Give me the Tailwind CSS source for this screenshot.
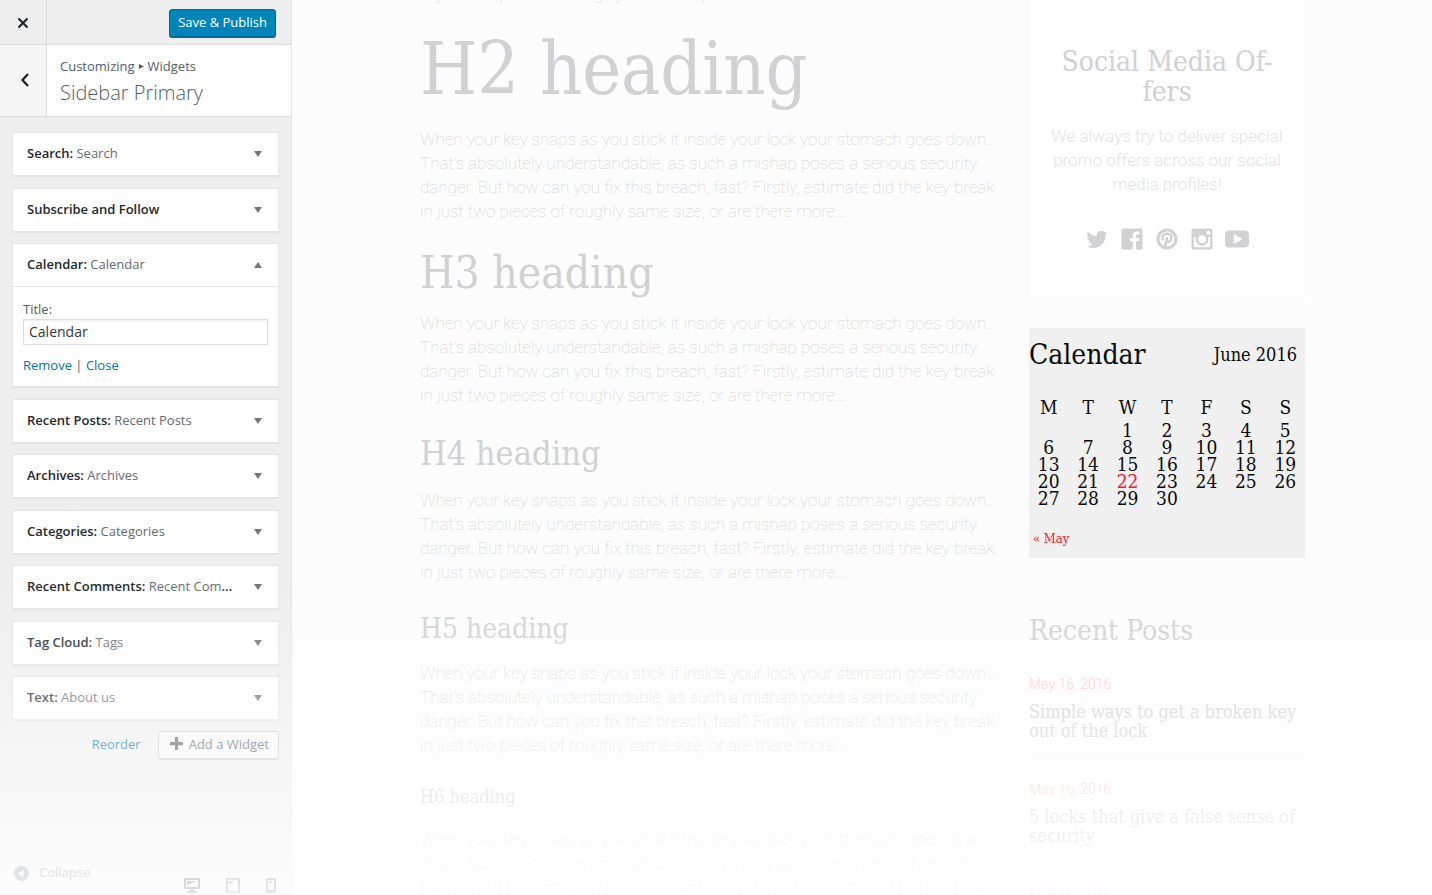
<!DOCTYPE html>
<html lang="en">
<head>
<meta charset="utf-8">
<title>Customizing: Sidebar Primary</title>
<script src="https://cdn.jsdelivr.net/npm/@tailwindcss/browser@4"></script>
</head>
<body class="relative flex h-screen overflow-hidden bg-[#fcfcfc] font-['Open_Sans','Noto_Sans',sans-serif] text-[13px] text-[#555d66]">

<aside class="flex w-[292px] shrink-0 flex-col border-r border-[#e5e5e5] bg-[#eee]">
  <header class="flex h-[45px] shrink-0 border-b border-[#ddd]">
    <button aria-label="Close" class="flex w-[47px] items-center justify-center border-r border-[#ddd] pt-[2px] text-[#191e23]">
      <svg class="size-3" viewBox="0 0 12 12" fill="none" stroke="currentColor" stroke-width="2"><path d="M1.5 1.5l9 9M10.5 1.5l-9 9"/></svg>
    </button>
    <div class="flex flex-1 items-center justify-end pt-px pr-[15px]">
      <button class="h-7 rounded-[3px] border border-[#006799] bg-[#0085ba] px-2 text-white shadow-[0_1px_0_#006799]">Save &amp; Publish</button>
    </div>
  </header>

  <div class="flex h-[72px] shrink-0 border-b border-[#ddd] bg-white">
    <button aria-label="Back" class="flex w-[47px] items-center justify-center border-r border-[#ddd] bg-[#f5f5f5] pb-[2px] pl-[4px] text-[#191e23]">
      <svg class="h-[14px] w-[10px]" viewBox="0 0 10 14" fill="none" stroke="currentColor" stroke-width="2.2"><path d="M8 1L2.500 7 8 13"/></svg>
    </button>
    <div class="px-[13px] pt-[11px]">
      <p class="flex items-center leading-5">Customizing
        <svg class="mx-1 size-[5px]" viewBox="0 0 5 5" fill="currentColor"><path d="M0 0l5 2.500L0 5z"/></svg>
        Widgets</p>
      <h1 class="text-xl font-light leading-[34px]">Sidebar Primary</h1>
    </div>
  </div>

  <main class="flex flex-1 flex-col pt-[15px] pr-3 pl-3">
    <ul class="flex min-h-[588px] flex-col justify-between text-[#72777c]">
      <li class="border border-[#e5e5e5] bg-white shadow-[0_1px_1px_rgba(0,0,0,0.04)]">
        <button class="flex h-[42px] w-full items-center justify-between pr-4 pl-[14px] text-left"><span class="w-[215px] truncate font-semibold text-[#23282d]">Search: <span class="font-normal text-[#646970]">Search</span></span><svg class="h-[6px] w-2" viewBox="0 0 8 6" fill="currentColor"><path d="M0 0h8L4 6z"/></svg></button>
      </li>
      <li class="border border-[#e5e5e5] bg-white shadow-[0_1px_1px_rgba(0,0,0,0.04)]">
        <button class="flex h-[42px] w-full items-center justify-between pr-4 pl-[14px] text-left"><span class="w-[215px] truncate font-semibold text-[#23282d]">Subscribe and Follow</span><svg class="h-[6px] w-2" viewBox="0 0 8 6" fill="currentColor"><path d="M0 0h8L4 6z"/></svg></button>
      </li>
      <li class="border border-[#e5e5e5] bg-white shadow-[0_1px_1px_rgba(0,0,0,0.04)]">
        <button class="flex h-[43px] w-full items-center justify-between border-b border-[#e5e5e5] pr-4 pl-[14px] text-left"><span class="w-[215px] truncate font-semibold text-[#23282d]">Calendar: <span class="font-normal text-[#646970]">Calendar</span></span><svg class="h-[6px] w-2" viewBox="0 0 8 6" fill="currentColor"><path d="M0 6h8L4 0z"/></svg></button>
        <div class="px-[10px] pt-3 pb-[11px] text-[#555d66]">
          <label for="cal-title" class="block leading-5">Title:</label>
          <input id="cal-title" type="text" value="Calendar" class="block h-[26px] w-full border border-[#ddd] bg-white px-[5px] pb-[2px] text-sm text-[#32373c] shadow-[inset_0_1px_2px_rgba(0,0,0,0.07)]">
          <p class="pt-[10px] leading-5"><a href="#" class="text-[#0073aa]">Remove</a> | <a href="#" class="text-[#0073aa]">Close</a></p>
        </div>
      </li>
      <li class="border border-[#e5e5e5] bg-white shadow-[0_1px_1px_rgba(0,0,0,0.04)]">
        <button class="flex h-[42px] w-full items-center justify-between pr-4 pl-[14px] text-left"><span class="w-[215px] truncate font-semibold text-[#23282d]">Recent Posts: <span class="font-normal text-[#646970]">Recent Posts</span></span><svg class="h-[6px] w-2" viewBox="0 0 8 6" fill="currentColor"><path d="M0 0h8L4 6z"/></svg></button>
      </li>
      <li class="border border-[#e5e5e5] bg-white shadow-[0_1px_1px_rgba(0,0,0,0.04)]">
        <button class="flex h-[42px] w-full items-center justify-between pr-4 pl-[14px] text-left"><span class="w-[215px] truncate font-semibold text-[#23282d]">Archives: <span class="font-normal text-[#646970]">Archives</span></span><svg class="h-[6px] w-2" viewBox="0 0 8 6" fill="currentColor"><path d="M0 0h8L4 6z"/></svg></button>
      </li>
      <li class="border border-[#e5e5e5] bg-white shadow-[0_1px_1px_rgba(0,0,0,0.04)]">
        <button class="flex h-[42px] w-full items-center justify-between pr-4 pl-[14px] text-left"><span class="w-[215px] truncate font-semibold text-[#23282d]">Categories: <span class="font-normal text-[#646970]">Categories</span></span><svg class="h-[6px] w-2" viewBox="0 0 8 6" fill="currentColor"><path d="M0 0h8L4 6z"/></svg></button>
      </li>
      <li class="border border-[#e5e5e5] bg-white shadow-[0_1px_1px_rgba(0,0,0,0.04)]">
        <button class="flex h-[42px] w-full items-center justify-between pr-4 pl-[14px] text-left"><span class="w-[215px] truncate font-semibold text-[#23282d]">Recent Comments: <span class="font-normal text-[#646970]">Recent Com</span>...</span><svg class="h-[6px] w-2" viewBox="0 0 8 6" fill="currentColor"><path d="M0 0h8L4 6z"/></svg></button>
      </li>
      <li class="border border-[#e5e5e5] bg-white shadow-[0_1px_1px_rgba(0,0,0,0.04)]">
        <button class="flex h-[42px] w-full items-center justify-between pr-4 pl-[14px] text-left"><span class="w-[215px] truncate font-semibold text-[#23282d]">Tag Cloud: <span class="font-normal text-[#646970]">Tags</span></span><svg class="h-[6px] w-2" viewBox="0 0 8 6" fill="currentColor"><path d="M0 0h8L4 6z"/></svg></button>
      </li>
      <li class="border border-[#e5e5e5] bg-white shadow-[0_1px_1px_rgba(0,0,0,0.04)]">
        <button class="flex h-[42px] w-full items-center justify-between pr-4 pl-[14px] text-left"><span class="w-[215px] truncate font-semibold text-[#23282d]">Text: <span class="font-normal text-[#646970]">About us</span></span><svg class="h-[6px] w-2" viewBox="0 0 8 6" fill="currentColor"><path d="M0 0h8L4 6z"/></svg></button>
      </li>
    </ul>
    <div class="flex items-center justify-end gap-[17px] pt-[11px]">
      <a href="#" class="text-[#0073aa]">Reorder</a>
      <button class="flex h-7 items-center gap-[6px] rounded-[3px] border border-[#ccc] bg-[#f7f7f7] pr-[9px] pl-[11px] shadow-[0_1px_0_#ccc]">
        <svg class="mb-[3px] size-[13px]" viewBox="0 0 12 12" fill="currentColor"><path d="M4.500 0h3v4.500H12v3H7.500V12h-3V7.500H0v-3h4.500z"/></svg>
        Add a Widget</button>
    </div>
  </main>

  <footer class="flex h-[45px] shrink-0 justify-between border-t border-[#ddd] pr-[15px] pl-[14px]">
    <button class="flex items-center gap-[10px] text-[#72777c]">
      <svg class="size-[15px]" viewBox="0 0 15 15"><circle cx="7.500" cy="7.500" r="7.500" fill="#72777c"/><path d="M9.500 3.500v8L4 7.500z" fill="#eee"/></svg>
      Collapse</button>
    <div class="flex items-start gap-[26px] pt-[26px] text-[#32373c]">
      <button aria-label="Desktop preview"><svg class="h-4 w-4" viewBox="0 0 16 16"><path fill="currentColor" fill-rule="evenodd" d="M0 1h16v11h-6l1 2h2v2H3v-2h2l1-2H0zM2 3v7h12V3z"/><path fill="currentColor" d="M3 4h9L3 8z"/></svg></button>
      <button aria-label="Tablet preview"><svg class="h-4 w-[14px]" viewBox="0 0 14 16"><path fill="currentColor" opacity=".75" fill-rule="evenodd" d="M0 1h14v15H0zM2 2.500v12h10v-12z"/><path fill="currentColor" opacity=".75" d="M3 4h5L3 8z"/></svg></button>
      <button aria-label="Phone preview"><svg class="h-4 w-[10px]" viewBox="0 0 10 16"><path fill="currentColor" opacity=".75" fill-rule="evenodd" d="M0 1h10v15H0zM2 3v10h6V3z"/><path fill="currentColor" opacity=".75" d="M3 4h4L3 8z"/></svg></button>
    </div>
  </footer>
</aside>

<div class="flex-1 overflow-hidden pr-4 pl-[17px]">
  <div class="mx-auto flex max-w-[885px] justify-between font-['Roboto_Slab','DejaVu_Serif_Condensed','DejaVu_Serif',serif] text-[#d1d1d3]">
    <article class="w-[580px]">
      <p class="-mt-[90px] font-[Roboto,sans-serif] text-[17px] font-thin leading-6 text-[#d4d4d6]">When your key snaps as you stick it inside your lock your stomach goes down… That’s absolutely understandable, as such a mishap poses a serious security danger. But how can you fix this breach, fast? Firstly, estimate did the key break in just two pieces of roughly same size, or are there more…</p>
      <h2 class="mt-[26px] mb-[21px] text-[73px] leading-[74px]">H2 heading</h2>
      <p class="font-[Roboto,sans-serif] text-[17px] font-thin leading-6 text-[#d4d4d6]">When your key snaps as you stick it inside your lock your stomach goes down… That’s absolutely understandable, as such a mishap poses a serious security danger. But how can you fix this breach, fast? Firstly, estimate did the key break in just two pieces of roughly same size, or are there more…</p>
      <h3 class="mt-7 mb-4 text-[44px] leading-[44px]">H3 heading</h3>
      <p class="font-[Roboto,sans-serif] text-[17px] font-thin leading-6 text-[#d4d4d6]">When your key snaps as you stick it inside your lock your stomach goes down… That’s absolutely understandable, as such a mishap poses a serious security danger. But how can you fix this breach, fast? Firstly, estimate did the key break in just two pieces of roughly same size, or are there more…</p>
      <h4 class="mt-[29px] mb-[18px] text-[34px] leading-[34px]">H4 heading</h4>
      <p class="font-[Roboto,sans-serif] text-[17px] font-thin leading-6 text-[#d4d4d6]">When your key snaps as you stick it inside your lock your stomach goes down… That’s absolutely understandable, as such a mishap poses a serious security danger. But how can you fix this breach, fast? Firstly, estimate did the key break in just two pieces of roughly same size, or are there more…</p>
      <h5 class="mt-[31px] mb-[18px] text-[28px] leading-7">H5 heading</h5>
      <p class="font-[Roboto,sans-serif] text-[17px] font-thin leading-6 text-[#d4d4d6]">When your key snaps as you stick it inside your lock your stomach goes down… That’s absolutely understandable, as such a mishap poses a serious security danger. But how can you fix this breach, fast? Firstly, estimate did the key break in just two pieces of roughly same size, or are there more…</p>
      <h6 class="mt-[30px] mb-5 text-[18px] leading-5">H6 heading</h6>
      <p class="font-[Roboto,sans-serif] text-[17px] font-thin leading-6 text-[#d4d4d6]">When your key snaps as you stick it inside your lock your stomach goes down… That’s absolutely understandable, as such a mishap poses a serious security danger. But how can you fix this breach, fast? Firstly, estimate did the key break in just two pieces of roughly same size, or are there more…</p>
    </article>

    <div class="w-[276px]">
      <section class="bg-[#fefefe] px-5 pt-[47px] pb-[48px] text-center">
        <h2 class="text-[28px] leading-[30px]">Social Media Of-<br>fers</h2>
        <p class="pt-[17px] font-[Roboto,sans-serif] text-[17px] font-light leading-6 text-[#e4e4e6]">We always try to deliver special promo offers across our social media profiles!</p>
        <div class="flex items-center justify-center gap-[11px] pt-[31px]">
          <a href="#" aria-label="Twitter"><svg class="size-6" viewBox="0 0 24 24" fill="currentColor"><path d="M22.500 5.900c-.8.350-1.600.580-2.500.690.900-.540 1.580-1.390 1.900-2.400-.830.500-1.760.860-2.750 1.050A4.320 4.320 0 0 0 11.800 9.200 12.300 12.300 0 0 1 2.900 4.700a4.300 4.300 0 0 0 1.340 5.770c-.7-.020-1.370-.220-1.960-.540v.050c0 2.100 1.490 3.840 3.470 4.240-.64.170-1.310.2-1.950.070a4.320 4.320 0 0 0 4.040 3A8.700 8.700 0 0 1 1.500 19.100a12.240 12.240 0 0 0 6.630 1.950c8 0 12.500-6.700 12.200-12.900.85-.6 1.600-1.370 2.170-2.250z"/></svg></a>
          <a href="#" aria-label="Facebook"><svg class="size-6" viewBox="0 0 24 24" fill="currentColor"><path d="M21.500 1.500h-19a1 1 0 0 0-1 1v19a1 1 0 0 0 1 1h10.200v-8.300H10V11h2.700V8.700c0-2.800 1.700-4.300 4.200-4.300 1.200 0 2.200.1 2.500.15V7.500h-1.700c-1.350 0-1.600.65-1.600 1.600V11h3.100l-.4 3.200h-2.700v8.300h5.400a1 1 0 0 0 1-1v-19a1 1 0 0 0-1-1z"/></svg></a>
          <a href="#" aria-label="Pinterest"><svg class="size-6" viewBox="0 0 24 24"><circle cx="12" cy="12" r="9" fill="none" stroke="currentColor" stroke-width="3"/><path d="M8.300 13.200c-2.200-4 .5-6.500 3.900-6.500 3 0 4.600 1.900 4.300 4.400-.3 3-2.500 4.300-4.600 3.300M12.300 10l-2.600 11" fill="none" stroke="currentColor" stroke-width="2.500"/></svg></a>
          <a href="#" aria-label="Instagram"><svg class="size-6" viewBox="0 0 24 24"><rect x="1.500" y="1.500" width="21" height="21" rx="2.500" fill="currentColor"/><path d="M3.800 10H20.200v9.200a1 1 0 0 1-1 1H4.800a1 1 0 0 1-1-1z" fill="#fefefe"/><path d="M16.500 4H20v3.500h-3.500z" fill="#fefefe"/><circle cx="12" cy="12.300" r="6.400" fill="currentColor"/><circle cx="12" cy="12.300" r="4" fill="#fefefe"/></svg></a>
          <a href="#" aria-label="YouTube"><svg class="size-6" viewBox="0 0 24 24" fill="currentColor"><path fill-rule="evenodd" d="M5 3.500h14c3.500 0 5 1.500 5 5v7c0 3.500-1.500 5-5 5H5c-3.500 0-5-1.500-5-5v-7c0-3.500 1.500-5 5-5zM8.800 7v10l8.600-5z"/></svg></a>
        </div>
      </section>

      <section class="mt-[29px] h-[230px] bg-[#f0f0f0] text-[#0a0a0a]">
        <div class="flex items-center justify-between pt-[9px] pr-2">
          <h2 class="text-[28px] leading-9">Calendar</h2>
          <span class="text-[18px] leading-9">June 2016</span>
        </div>
        <table class="mt-[21px] w-full table-fixed border-collapse text-center text-[19px] leading-[17px]">
          <thead><tr class="align-top"><th class="h-[28px] pt-[5px] font-normal">M</th><th class="pt-[5px] font-normal">T</th><th class="pt-[5px] font-normal">W</th><th class="pt-[5px] font-normal">T</th><th class="pt-[5px] font-normal">F</th><th class="pt-[5px] font-normal">S</th><th class="pt-[5px] font-normal">S</th></tr></thead>
          <tbody>
            <tr><td></td><td></td><td>1</td><td>2</td><td>3</td><td>4</td><td>5</td></tr>
            <tr><td>6</td><td>7</td><td>8</td><td>9</td><td>10</td><td>11</td><td>12</td></tr>
            <tr><td>13</td><td>14</td><td>15</td><td>16</td><td>17</td><td>18</td><td>19</td></tr>
            <tr><td>20</td><td>21</td><td class="text-[#ff1330]">22</td><td>23</td><td>24</td><td>25</td><td>26</td></tr>
            <tr><td>27</td><td>28</td><td>29</td><td>30</td><td></td><td></td><td></td></tr>
          </tbody>
        </table>
        <p class="pt-5 pl-1 text-[13px] leading-6"><a href="#" class="text-[#ff1330]">« May</a></p>
      </section>

      <section class="mt-[55px]">
        <h2 class="text-[28px] leading-9">Recent Posts</h2>
        <ul>
          <li class="border-b border-[#f5f5f5] pt-[25px] pb-[19px]">
            <p class="font-[Roboto,sans-serif] text-[14px] font-light leading-5 text-[#fcc4ca]">May 16, 2016</p>
            <a href="#" class="mt-2 block text-[18px] leading-[19px]">Simple ways to get a broken key out of the lock</a>
          </li>
          <li class="border-b border-[#f5f5f5] pt-[19px] pb-[19px]">
            <p class="font-[Roboto,sans-serif] text-[14px] font-light leading-5 text-[#fcc4ca]">May 16, 2016</p>
            <a href="#" class="mt-2 block text-[18px] leading-[19px]">5 locks that give a false sense of security</a>
          </li>
          <li class="pt-[18px]">
            <p class="font-[Roboto,sans-serif] text-[14px] font-light leading-5 text-[#fcc4ca]">May 16, 2016</p>
          </li>
        </ul>
      </section>
    </div>
  </div>
</div>

<div class="pointer-events-none absolute inset-x-0 bottom-0 h-[315px] bg-linear-to-b from-white/0 to-white/85"></div>
</body>
</html>
